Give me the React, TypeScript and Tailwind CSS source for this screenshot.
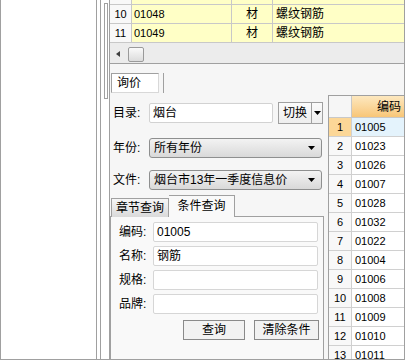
import React from 'react';

const font = "font-['Liberation_Sans','Noto_Sans_CJK_SC',sans-serif]";

function Down() {
  return (
    <svg width="7" height="4" viewBox="0 0 7 4">
      <path d="M0 0h7L3.5 4z" fill="#000" />
    </svg>
  );
}

const topRows = [
  { n: '9', code: '01047', unit: '材', name: '螺纹钢筋' },
  { n: '10', code: '01048', unit: '材', name: '螺纹钢筋' },
  { n: '11', code: '01049', unit: '材', name: '螺纹钢筋' },
];

const codes = [
  '01005', '01023', '01026', '01007', '01028', '01032', '01022',
  '01004', '01006', '01008', '01009', '01010', '01011',
];

const fields = [
  { label: '编码', value: '01005' },
  { label: '名称', value: '钢筋' },
  { label: '规格', value: '' },
  { label: '品牌', value: '' },
];

function Combo({ text }: { text: string }) {
  return (
    <div className="w-[173px] h-[20px] flex items-center justify-between pl-[4px] pr-[6px] rounded-[3px] border border-[#8e8f8f] bg-gradient-to-b from-[#f3f3f3] to-[#d9d9d9]">
      <span className="leading-none">{text}</span>
      <Down />
    </div>
  );
}

export default function App() {
  return (
    <div className={`w-[405px] h-[360px] overflow-hidden flex bg-white border-x border-b border-[#a0a0a0] text-[12px] text-black ${font}`}>
      {/* left empty pane + splitter */}
      <div className="w-[95px] shrink-0" />
      <div className="w-[5px] shrink-0 border-x border-[#a0a0a0]" />
      <div className="w-[8px] shrink-0 pl-[3px] pt-[3px]">
        <div className="w-[4px] h-[96px] border border-[#a0a0a0]" />
      </div>

      {/* main panel */}
      <div className="flex-1 min-w-0 border-l border-[#a0a0a0] flex flex-col">
        {/* top grid */}
        <div className="h-[43px] overflow-hidden shrink-0">
          <div className="-mt-[14px]">
            {topRows.map((r) => (
              <div key={r.n} className="h-[19px] flex border-b border-[#c8c8c8]">
                <div className="w-[22px] bg-[#f8f8f8] border-r border-[#c8c8c8] flex items-center justify-center text-[11px]">{r.n}</div>
                <div className="w-[100px] bg-[#ffffc6] border-r border-[#c8c8c8] flex items-center pl-[2px] text-[11px]">{r.code}</div>
                <div className="w-[41px] bg-[#ffffc6] border-r border-[#c8c8c8] flex items-center justify-center">{r.unit}</div>
                <div className="flex-1 bg-[#ffffc6] flex items-center pl-[3px]">{r.name}</div>
              </div>
            ))}
          </div>
        </div>

        {/* horizontal scrollbar */}
        <div className="h-[21px] shrink-0 bg-[#ececec] border-b border-[#a0a0a0] flex items-start">
          <svg width="4" height="6" viewBox="0 0 4 6" className="ml-[6px] mt-[8px]">
            <path d="M4 0v6L0 3z" fill="#404040" />
          </svg>
          <div className="ml-[8px] mt-[4px] w-[16px] h-[15px] rounded-[2px] border border-[#9a9a9a] bg-gradient-to-b from-[#fafafa] to-[#dcdcdc]" />
        </div>

        {/* lower area */}
        <div className="flex-1 min-h-0 bg-[#f6f6f6] flex flex-col">
          <div className="pt-[9px] pl-[1px] flex items-start shrink-0">
            <div className="w-[48px] h-[20px] border border-t-[#a0a0a0] border-l-[#a0a0a0] border-r-[#d8d8d8] border-b-[#d8d8d8] bg-white flex items-center pl-[5px]">询价</div>
            <div className="ml-[4px] w-px h-[20px] bg-[#a0a0a0]" />
          </div>

          <div className="mt-[2px] flex flex-1 min-h-0">
            {/* left form column */}
            <div className="w-[218px] shrink-0 flex flex-col">
              <div className="mt-[7px] h-[22px] flex items-center pl-[3px]">
                <span className="w-[36px]">目录:</span>
                <div className="w-[124px] h-[20px] bg-white border border-[#d2d2d2] rounded-[2px] flex items-center pl-[3px]">烟台</div>
                <div className="ml-[5px] h-[22px] flex border border-[#a0a0a0] bg-gradient-to-b from-[#fbfbfb] to-[#eeeeee]">
                  <div className="w-[33px] border-r border-[#a0a0a0] flex items-center justify-center">切换</div>
                  <div className="w-[10px] flex items-center justify-center"><Down /></div>
                </div>
              </div>

              <div className="mt-[14px] h-[20px] flex items-center pl-[3px]">
                <span className="w-[36px]">年份:</span>
                <Combo text="所有年份" />
              </div>

              <div className="mt-[12px] h-[20px] flex items-center pl-[3px]">
                <span className="w-[36px]">文件:</span>
                <Combo text="烟台市13年一季度信息价" />
              </div>

              {/* tabs */}
              <div className="mt-[5px] h-[22px] flex items-end pl-[1px] -mb-px relative">
                <div className="w-[58px] h-[19px] border border-b-0 border-[#a0a0a0] bg-gradient-to-b from-[#f6f6f6] to-[#dadada] flex items-center justify-center">章节查询</div>
                <div className="w-[66px] h-[22px] border border-b-0 border-l-0 border-[#a0a0a0] bg-[#f9f9f9] flex items-center justify-center pb-[2px]">条件查询</div>
              </div>
              <div className="w-[214px] flex-1 border-t border-x border-[#a0a0a0] bg-[#f9f9f9] pt-[5px] pl-[8px] flex flex-col gap-[4px]">
                {fields.map((f) => (
                  <div key={f.label} className="h-[20px] flex items-center">
                    <span className="w-[34px]">{f.label}:</span>
                    <div className="w-[165px] h-[20px] bg-white border border-[#d6d6d6] rounded-[2px] flex items-center pl-[3px]">{f.value}</div>
                  </div>
                ))}
                <div className="mt-[2px] flex justify-end gap-[9px] pr-[4px]">
                  <div className="w-[62px] h-[20px] border border-[#8a8a8a] bg-[#f2f2f2] flex items-center justify-center">查询</div>
                  <div className="w-[65px] h-[20px] border border-[#8a8a8a] bg-[#f2f2f2] flex items-center justify-center">清除条件</div>
                </div>
              </div>
            </div>

            {/* right grid */}
            <div className="flex-1 min-w-0 border-l border-t border-[#a0a0a0] bg-white overflow-hidden">
              <div className="h-[22px] flex border-b border-[#c8c8c8]">
                <div className="w-[23px] shrink-0 bg-[#f6f6f6] border-r border-[#c8c8c8]" />
                <div className="flex-1 bg-gradient-to-b from-[#fde8bf] to-[#f8c677] flex items-center pl-[25px]">编码</div>
              </div>
              {codes.map((c, i) => (
                <div key={c} className="h-[19px] flex border-b border-[#d0d0d0]">
                  <div className={`w-[23px] shrink-0 border-r border-[#d0d0d0] flex items-center justify-center text-[11px] ${i === 0 ? 'bg-[#fcd797]' : 'bg-[#f8f8f8]'}`}>{i + 1}</div>
                  <div className={`flex-1 flex items-center pl-[3px] text-[11px] ${i === 0 ? 'bg-[#e4f3fc]' : 'bg-white'}`}>{c}</div>
                </div>
              ))}
            </div>
          </div>
        </div>
      </div>
    </div>
  );
}
